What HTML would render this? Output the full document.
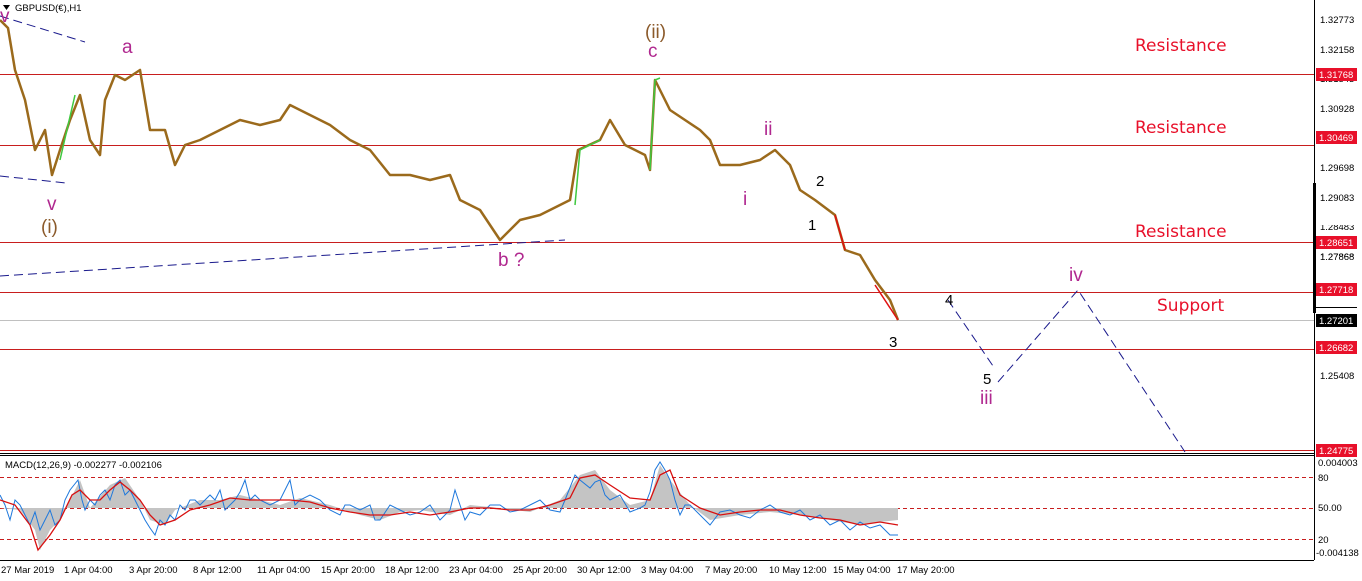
<!DOCTYPE html>
<html><head><meta charset="utf-8"><style>
body{margin:0;background:#fff;width:1362px;height:581px;overflow:hidden;font-family:"Liberation Sans",sans-serif}
svg{display:block}
.ax{font-family:"Liberation Sans",sans-serif;font-size:9.5px;fill:#000}
.w{font-family:"Liberation Sans",sans-serif;font-size:19px}
.p{fill:#b0288f}.b{fill:#8b5a2b}.k{fill:#000}
.r{fill:#e8102a;font-family:"DejaVu Sans",sans-serif;font-size:17px}
.wt{fill:#fff}
</style></head><body>
<svg width="1362" height="581" viewBox="0 0 1362 581">
<rect width="1362" height="581" fill="#fff"/>
<g stroke="#c81e1e" stroke-width="1">
<line x1="0" y1="74.5" x2="1314" y2="74.5"/>
<line x1="0" y1="145.5" x2="1314" y2="145.5"/>
<line x1="0" y1="242.5" x2="1314" y2="242.5"/>
<line x1="0" y1="292.5" x2="1314" y2="292.5"/>
<line x1="0" y1="349.5" x2="1314" y2="349.5"/>
<line x1="0" y1="450.5" x2="1314" y2="450.5"/>
</g>
<line x1="0" y1="320.5" x2="1314" y2="320.5" stroke="#c0c0c0"/>
<g stroke="#1a1a8c" stroke-dasharray="9,5" fill="none" stroke-width="1">
<line x1="0" y1="16" x2="85" y2="42"/>
<line x1="0" y1="176" x2="66" y2="183"/>
<line x1="0" y1="276" x2="565" y2="240"/>
<polyline points="948,300 993,366"/>
<polyline points="998,382 1078,290 1185,452"/>
</g>
<polyline fill="none" stroke="#9b6a1c" stroke-width="2.5" stroke-linejoin="round" points="0,20 8,28 15,70 25,100 35,150 45,130 52,175 60,150 70,120 80,95 90,140 100,155 105,100 115,75 125,80 140,70 150,130 165,130 175,165 185,145 200,140 220,130 240,120 260,125 280,120 290,105 310,115 330,125 350,140 370,150 390,175 410,175 430,180 450,175 460,200 480,210 500,240 520,220 540,215 560,205 570,200 578,150 600,140 610,120 625,145 645,155 650,170 655,80 660,90 670,110 685,120 700,130 710,140 720,165 740,165 760,160 775,150 790,165 800,190 815,200 835,215 845,250 860,255 875,280 890,300 898,320"/>
<polyline fill="none" stroke="#3fc83f" stroke-width="1.5" points="575,205 580,150 600,140"/>
<polyline fill="none" stroke="#3fc83f" stroke-width="1.5" points="650,170 655,80 660,78"/>
<polyline fill="none" stroke="#3fc83f" stroke-width="1.5" points="60,160 75,95"/>
<polyline fill="none" stroke="#e01010" stroke-width="1.5" points="835,215 845,250"/>
<polyline fill="none" stroke="#e01010" stroke-width="1.5" points="875,285 898,320"/>
<text class="w p" x="0" y="22">v</text>
<text class="w p" x="122" y="53">a</text>
<text class="w p" x="47" y="210">v</text>
<text class="w b" x="41" y="233">(i)</text>
<text class="w b" x="645" y="38">(ii)</text>
<text class="w p" x="648" y="57">c</text>
<text class="w p" x="764" y="135">ii</text>
<text class="w p" x="743" y="205">i</text>
<text class="w p" x="498" y="266">b ?</text>
<text class="w p" x="1069" y="281">iv</text>
<text class="w p" x="980" y="404">iii</text>
<g font-size="15" font-family="Liberation Sans,sans-serif">
<text class="k" x="816" y="186">2</text>
<text class="k" x="808" y="230">1</text>
<text class="k" x="889" y="347">3</text>
<text class="k" x="945" y="305">4</text>
<text class="k" x="983" y="384">5</text>
</g>
<text class="r" x="1135" y="51">Resistance</text>
<text class="r" x="1135" y="133">Resistance</text>
<text class="r" x="1135" y="237">Resistance</text>
<text class="r" x="1157" y="311">Support</text>
<text class="ax" x="15" y="11" font-size="9">GBPUSD(€),H1</text>
<polygon points="3,5 10,5 6.5,10" fill="#000"/>
<line x1="1314.5" y1="0" x2="1314.5" y2="560" stroke="#000"/>
<rect x="1313" y="183" width="3" height="130" fill="#000"/>
<g class="ax">
<text x="1320" y="23">1.32773</text>
<text x="1320" y="53">1.32158</text>
<text x="1320" y="82">1.31543</text>
<text x="1320" y="112">1.30928</text>
<text x="1320" y="141">1.30313</text>
<text x="1320" y="171">1.29698</text>
<text x="1320" y="201">1.29083</text>
<text x="1320" y="230">1.28483</text>
<text x="1320" y="260">1.27868</text>
<text x="1320" y="349">1.26023</text>
<text x="1320" y="379">1.25408</text>
</g>
<rect x="1316" y="68" width="41" height="13" fill="#e8102a"/>
<rect x="1316" y="131" width="41" height="13" fill="#e8102a"/>
<rect x="1316" y="212" width="41" height="13" fill="#e8102a"/>
<rect x="1316" y="257" width="41" height="13" fill="#e8102a"/>
<rect x="1316" y="283" width="41" height="13" fill="#e8102a"/>
<rect x="1316" y="307" width="41" height="13" fill="#000"/>
<rect x="1316" y="307" width="41" height="0" fill="#000"/>
<rect x="1316" y="308" width="41" height="12" fill="#000"/>
<rect x="1316" y="308" width="0" height="0"/>
<rect x="1316" y="307" width="0" height="0"/>
<rect x="1316" y="307" width="41" height="13" fill="#000" transform="translate(0,7)"/>
<rect x="1316" y="308" width="41" height="13" fill="#fff"/>
<rect x="1316" y="314" width="41" height="13" fill="#000"/>
<rect x="1316" y="341" width="41" height="13" fill="#e8102a"/>
<rect x="1316" y="444" width="41" height="13" fill="#e8102a"/>
<rect x="1316" y="212" width="41" height="13" fill="#fff"/>
<rect x="1316" y="236" width="41" height="13" fill="#e8102a"/>
<rect x="1316" y="257" width="41" height="13" fill="#fff"/>
<text class="ax" x="1320" y="260">1.27868</text>
<rect x="1316" y="258" width="41" height="0"/>
<rect x="1316" y="258" width="41" height="13" fill="#e8102a" transform="translate(0,0)" opacity="0"/>
<rect x="1316" y="283" width="41" height="0"/>
<g class="ax">
<text x="1319" y="78" class="wt" style="fill:#fff">1.31768</text>
<text x="1319" y="141" style="fill:#fff">1.30469</text>
<text x="1319" y="246" style="fill:#fff">1.28651</text>
<text x="1319" y="293" style="fill:#fff">1.27718</text>
<text x="1319" y="324" style="fill:#fff">1.27201</text>
<text x="1319" y="351" style="fill:#fff">1.26682</text>
<text x="1319" y="454" style="fill:#fff">1.24775</text>
</g>
<line x1="0" y1="453.5" x2="1314" y2="453.5" stroke="#000"/>
<line x1="0" y1="455.5" x2="1314" y2="455.5" stroke="#000"/>
<line x1="0" y1="560.5" x2="1314" y2="560.5" stroke="#000"/>
<g stroke="#c81e1e" stroke-dasharray="4,3">
<line x1="0" y1="477.5" x2="1314" y2="477.5"/>
<line x1="0" y1="508.5" x2="1314" y2="508.5"/>
<line x1="0" y1="539.5" x2="1314" y2="539.5"/>
</g>
<path fill="#c4c4c4" d="M0,508 L20,510 35,530 40,550 50,530 60,520 70,500 80,480 90,508 110,485 125,478 140,500 150,520 165,525 175,510 200,500 220,500 240,495 260,500 280,505 300,498 330,505 360,515 380,520 400,512 420,510 450,515 470,505 500,508 530,512 560,500 580,475 595,470 610,490 630,505 650,500 660,465 670,480 690,505 710,520 740,515 770,512 800,515 830,520 860,525 880,522 898,520 L898,508 0,508Z"/>
<polyline fill="none" stroke="#1e78dc" stroke-width="1" points="0,495 5,505 10,520 15,500 20,505 25,515 30,525 35,512 40,530 45,520 50,510 55,525 60,520 65,500 70,490 74,485 78,480 82,500 85,510 90,500 95,505 100,495 105,490 110,500 115,485 120,480 125,495 130,490 135,500 140,510 145,520 150,528 155,535 160,520 165,525 170,515 175,520 180,505 185,510 190,500 195,500 200,505 210,495 215,500 220,490 225,510 230,505 235,500 240,492 245,480 250,500 255,495 260,500 270,505 280,500 285,490 290,480 295,505 300,500 310,495 320,500 330,510 340,515 345,505 350,505 360,510 370,505 375,520 380,520 390,505 400,510 410,515 420,512 430,505 440,520 450,510 455,490 460,505 465,520 470,512 480,515 490,505 500,505 510,512 520,510 530,505 540,500 550,510 560,512 565,500 575,475 580,480 590,488 595,482 600,480 605,495 610,500 620,495 630,512 640,508 645,505 650,492 655,470 660,462 665,470 670,480 675,500 680,515 685,505 690,505 700,515 710,525 720,512 730,510 740,515 750,518 760,510 770,505 780,512 790,515 800,510 810,520 820,515 830,525 840,520 850,530 860,522 870,528 880,525 885,530 890,535 898,535"/>
<polyline fill="none" stroke="#d81010" stroke-width="1.3" points="0,500 15,505 30,525 38,550 50,535 60,520 72,495 80,490 90,500 100,500 110,490 120,482 130,490 140,500 150,515 160,525 175,520 190,510 210,505 230,498 250,500 270,500 290,500 310,502 330,508 350,512 370,515 390,515 410,512 430,515 450,512 470,508 490,508 510,510 530,510 550,505 570,498 580,478 595,475 610,485 630,498 650,500 660,475 670,470 680,495 700,508 720,515 740,512 760,510 780,510 800,515 820,518 840,520 860,525 880,522 898,525"/>
<text class="ax" x="5" y="468" font-size="9">MACD(12,26,9) -0.002277 -0.002106</text>
<g class="ax" font-size="9">
<text x="1318" y="466">0.004003</text>
<text x="1318" y="481">80</text>
<text x="1318" y="511">50.00</text>
<text x="1318" y="543">20</text>
<text x="1316" y="556">-0.004138</text>
</g>
<g class="ax" font-size="9">
<text x="1" y="573">27 Mar 2019</text>
<text x="64" y="573">1 Apr 04:00</text>
<text x="129" y="573">3 Apr 20:00</text>
<text x="193" y="573">8 Apr 12:00</text>
<text x="257" y="573">11 Apr 04:00</text>
<text x="321" y="573">15 Apr 20:00</text>
<text x="385" y="573">18 Apr 12:00</text>
<text x="449" y="573">23 Apr 04:00</text>
<text x="513" y="573">25 Apr 20:00</text>
<text x="577" y="573">30 Apr 12:00</text>
<text x="641" y="573">3 May 04:00</text>
<text x="705" y="573">7 May 20:00</text>
<text x="769" y="573">10 May 12:00</text>
<text x="833" y="573">15 May 04:00</text>
<text x="897" y="573">17 May 20:00</text>
</g>
</svg>
</body></html>
